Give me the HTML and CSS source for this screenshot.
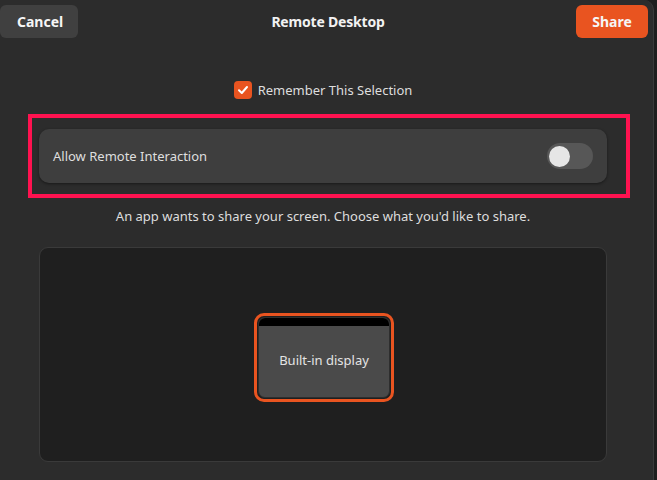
FILE: index.html
```html
<!doctype html>
<html>
	<head>
		<meta charset="utf-8">
		<title>Remote Desktop</title>
		<link rel="stylesheet" href="styles.css">
	</head>
	<body>
		<div class="window">
			<div class="header">
				<button class="btn cancel">Cancel</button>
				<div class="title">Remote Desktop</div>
				<button class="btn share">Share</button>
			</div>
			<div class="content">
				<label class="remember">
					<span class="check">
						<svg width="12" height="12" viewBox="0 0 12 12"><path d="M2 6.3 L4.8 9 L10 3" fill="none" stroke="#fff" stroke-width="2" stroke-linecap="round" stroke-linejoin="round"/></svg>
					</span>
					Remember This Selection
				</label>
				<div class="row">
					<span>Allow Remote Interaction</span>
					<span class="switch"><span class="knob"></span></span>
				</div>
				<div class="highlight"></div>
				<p class="hint">An app wants to share your screen. Choose what you'd like to share.</p>
				<div class="monitors">
					<div class="monitor">
						<div class="screen">
							<div class="bar"></div>
							<div class="name">Built-in display</div>
						</div>
					</div>
				</div>
			</div>
		</div>
	</body>
</html>
```

FILE: styles.css
```css
html, body {
	margin: 0px;
	background: #1e1e1e;
	height: 100%;
	overflow: hidden;
}
.window {
	margin-left: -6px;
	width: 659px;
	height: 480px;
	background: #2c2c2c;
	border-right: 1px solid #3a3a3a;
	border-top-right-radius: 10px;
	font-family: "Noto Sans", "Open Sans", sans-serif;
	color: #dedede;
	font-size: 13px;
	position: relative;
}
.header {
	display: flex;
	justify-content: space-between;
	align-items: center;
	padding: 5px 5px 0px 6px;
	height: 33px;
}
.btn {
	font-family: inherit;
	font-size: 14px;
	font-weight: bold;
	color: #f6f6f6;
	border: none;
	border-radius: 6px;
	height: 33px;
	padding: 0px 17px;
}
.cancel {
	background: #404040;
	width: 78px;
}
.share {
	background: #e95420;
	width: 72px;
	padding: 0px;
}
.title {
	font-size: 14px;
	font-weight: bold;
	color: #f2f2f2;
	margin-left: 2px;
	letter-spacing: -0.2px;
}
.content {
	padding: 0px 46px 0px 45px;
	display: flex;
	flex-direction: column;
	align-items: center;
}
.remember {
	display: flex;
	align-items: center;
	gap: 6px;
	margin-top: 43px;
	height: 18px;
}
.check {
	width: 18px;
	height: 18px;
	background: #e95420;
	border-radius: 4px;
	display: flex;
	align-items: center;
	justify-content: center;
}
.row {
	align-self: stretch;
	margin-top: 30px;
	height: 54px;
	background: #3e3e3e;
	border-radius: 10px;
	box-shadow: 0px 1px 3px rgba(0, 0, 0, 0.45);
	display: flex;
	align-items: center;
	justify-content: space-between;
	padding: 0px 14px;
}
.switch {
	width: 46px;
	height: 26px;
	background: #575757;
	border-radius: 13px;
	display: flex;
	align-items: center;
	padding-left: 2px;
	box-sizing: border-box;
}
.knob {
	width: 21px;
	height: 21px;
	border-radius: 50%;
	background: #e6e6e6;
}
.highlight {
	position: absolute;
	left: 34px;
	top: 114px;
	width: 594px;
	height: 76px;
	border: 4px solid #ff1250;
}
.hint {
	margin: 24px 0px 0px 0px;
	height: 18px;
	line-height: 18px;
}
.monitors {
	align-self: stretch;
	margin-top: 22px;
	height: 207px;
	background: #1f1f1f;
	border: 1px solid #3a3a3a;
	border-radius: 9px;
	display: flex;
	align-items: center;
	justify-content: center;
	padding-top: 6px;
	box-sizing: content-box;
}
.monitor {
	width: 134px;
	height: 83px;
	border: 3px solid #e95420;
	border-radius: 10px;
	display: flex;
	margin-left: 2px;
}
.screen {
	flex: 1;
	margin: 1px;
	border: 1px solid #2e2e2e;
	border-radius: 7px;
	background: #4a4a4a;
	overflow: hidden;
	display: flex;
	flex-direction: column;
}
.bar {
	height: 8px;
	background: #000;
}
.name {
	flex: 1;
	display: flex;
	align-items: center;
	justify-content: center;
	color: #e4e4e4;
	padding-bottom: 4px;
}
```
